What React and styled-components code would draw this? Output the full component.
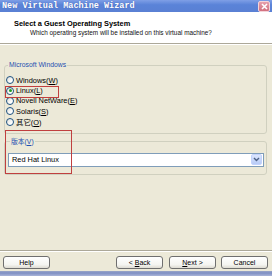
import React from "react";
import styled, { createGlobalStyle } from "styled-components";

const GlobalStyle = createGlobalStyle`
  html, body {
    margin: 0;
    padding: 0;
    background: #ece9d8;
  }
  * {
    box-sizing: border-box;
  }
`;

const Window = styled.div`
  width: 272px;
  height: 276px;
  display: flex;
  flex-direction: column;
  font-family: "Liberation Sans", Arial, sans-serif;
  background: #ece9d8;
  overflow: hidden;
`;

const TitleBar = styled.div`
  height: 12px;
  flex: 0 0 12px;
  display: flex;
  align-items: center;
  justify-content: space-between;
  padding: 0 2px 0 2px;
  background: linear-gradient(180deg, #7f9fe6 0%, #5a83d8 40%, #5a80d4 100%);
`;

const TitleText = styled.span`
  font-family: "Liberation Mono", "Courier New", monospace;
  font-weight: bold;
  font-size: 8.5px;
  color: #fff;
  white-space: nowrap;
  text-shadow: 0 0 1px rgba(40, 60, 140, 0.6);
`;

const CloseBtn = styled.div`
  width: 12px;
  height: 11px;
  margin-top: 1px;
  border-radius: 2px;
  background: linear-gradient(180deg, #e6a0ac 0%, #d2707f 100%);
  border: 1px solid #f4d4da;
  display: flex;
  align-items: center;
  justify-content: center;
`;

const Header = styled.div`
  height: 31px;
  flex: 0 0 31px;
  background: #fff;
  padding: 7px 0 0 14px;
  display: flex;
  flex-direction: column;
`;

const HeaderTitle = styled.div`
  font-weight: bold;
  font-size: 7.4px;
  line-height: 9px;
  color: #000;
`;

const HeaderSub = styled.div`
  font-size: 6.4px;
  line-height: 9px;
  color: #111;
  padding-left: 16px;
`;

const Rule = styled.div`
  height: 2px;
  flex: 0 0 2px;
  border-top: 1px solid #aca899;
  border-bottom: 1px solid #fff;
`;

const Body = styled.div`
  position: relative;
  flex: 1;
  padding: 16px 5px 0 4px;
  display: flex;
  flex-direction: column;
  gap: 4px;
`;

const Group = styled.fieldset`
  margin: 0;
  border: 1px solid #d0d0bf;
  border-radius: 3px;
  padding: ${(p) => p.$pad};
  min-width: 0;
`;

const Legend = styled.legend`
  padding: 0 1px;
  margin-left: 2px;
  font-family: "Liberation Sans", "Noto Sans CJK SC", sans-serif;
  font-size: 6.8px;
  line-height: 8px;
  height: 8px;
  color: #2450b0;
`;

const RadioList = styled.div`
  display: flex;
  flex-direction: column;
`;

const RadioRow = styled.div`
  height: 10.4px;
  display: flex;
  align-items: center;
  gap: 2px;
  font-family: "Liberation Sans", "Noto Sans CJK SC", sans-serif;
  font-size: 7.4px;
  color: #000;
  white-space: nowrap;
`;

const Radio = styled.span`
  width: 8px;
  height: 8px;
  flex: 0 0 8px;
  border-radius: 50%;
  border: 1px solid #1c5180;
  background: linear-gradient(135deg, #dcdcd6 0%, #fff 70%);
  display: flex;
  align-items: center;
  justify-content: center;
  &::after {
    content: "";
    width: 3px;
    height: 3px;
    border-radius: 50%;
    background: ${(p) => (p.$checked ? "#21a121" : "transparent")};
  }
`;

const U = styled.span`
  text-decoration: underline;
`;

const Select = styled.div`
  margin-top: 2px;
  height: 14px;
  border: 1px solid #7f9db9;
  background: #fff;
  display: flex;
  align-items: center;
  justify-content: space-between;
  padding: 0 1px 0 3px;
  font-size: 7.4px;
  color: #000;
`;

const SelectBtn = styled.div`
  width: 11px;
  height: 11px;
  border-radius: 2px;
  background: linear-gradient(180deg, #dce6fd 0%, #b8cbf6 100%);
  border: 1px solid #c3d3fd;
  display: flex;
  align-items: center;
  justify-content: center;
`;

const Mark = styled.div`
  position: absolute;
  border: 1px solid #c0403f;
  pointer-events: none;
`;

const FooterRule = styled.div`
  height: 2px;
  flex: 0 0 2px;
  border-top: 1px solid #aca899;
  border-bottom: 1px solid #fff;
`;

const Footer = styled.div`
  height: 19px;
  flex: 0 0 19px;
  display: flex;
  align-items: flex-start;
  padding: 4px 4px 0 3px;
  gap: 5px;
`;

const Spacer = styled.div`
  flex: 1;
`;

const Button = styled.div`
  width: 47px;
  height: 13px;
  border: 1px solid #6f6f6f;
  border-radius: 3px;
  background: linear-gradient(180deg, #ffffff 0%, #f4f4f0 70%, #dedbd2 100%);
  display: flex;
  align-items: center;
  justify-content: center;
  font-size: 7px;
  color: #000;
  white-space: pre;
  margin-left: ${(p) => p.$ml || 0};
`;

const BottomEdge = styled.div`
  height: 5px;
  flex: 0 0 5px;
  background: linear-gradient(180deg, #9aa6c8 0%, #7e8fc4 40%, #a9b4d8 100%);
`;

const osList = [
  { name: "Windows", key: "W" },
  { name: "Linux", key: "L", checked: true },
  { name: "Novell NetWare", key: "E" },
  { name: "Solaris", key: "S" },
  { name: "其它", key: "O" },
];

export default function App() {
  return (
    <>
      <GlobalStyle />
      <Window>
        <TitleBar>
          <TitleText>New Virtual Machine Wizard</TitleText>
          <CloseBtn>
            <svg width="7" height="7" viewBox="0 0 7 7">
              <path d="M1 1L6 6M6 1L1 6" stroke="#fff" strokeWidth="1.6" />
            </svg>
          </CloseBtn>
        </TitleBar>
        <Header>
          <HeaderTitle>Select a Guest Operating System</HeaderTitle>
          <HeaderSub>Which operating system will be installed on this virtual machine?</HeaderSub>
        </Header>
        <Rule />
        <Body>
          <Group $pad="6px 0 6px 1px">
            <Legend>Microsoft Windows</Legend>
            <RadioList>
              {osList.map((os) => (
                <RadioRow key={os.key}>
                  <Radio $checked={os.checked} />
                  <span>{os.name}(<U>{os.key}</U>)</span>
                </RadioRow>
              ))}
            </RadioList>
          </Group>
          <Group $pad="5px 2px 7px 3px">
            <Legend>版本(<U>V</U>)</Legend>
            <Select>
              <span>Red Hat Linux</span>
              <SelectBtn>
                <svg width="7" height="5" viewBox="0 0 7 5">
                  <path d="M1 1L3.5 3.5L6 1" stroke="#4d6185" strokeWidth="1.4" fill="none" />
                </svg>
              </SelectBtn>
            </Select>
          </Group>
          <Mark style={{ left: 5, top: 41, width: 54, height: 12 }} />
          <Mark style={{ left: 5, top: 85, width: 67, height: 44 }} />
        </Body>
        <FooterRule />
        <Footer>
          <Button>Help</Button>
          <Spacer />
          <Button><span>&lt; <U>B</U>ack</span></Button>
          <Button $ml="1px"><span><U>N</U>ext &gt;</span></Button>
          <Button>Cancel</Button>
        </Footer>
        <BottomEdge />
      </Window>
    </>
  );
}
